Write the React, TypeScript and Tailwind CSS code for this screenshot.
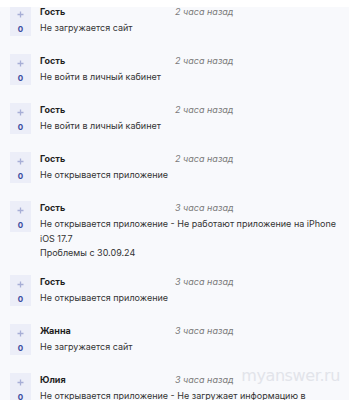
import React from "react";

type Item = { name: string; time: string; lines: string[] };

const items: Item[] = [
  { name: "Гость", time: "2 часа назад", lines: ["Не загружается сайт"] },
  { name: "Гость", time: "2 часа назад", lines: ["Не войти в личный кабинет"] },
  { name: "Гость", time: "2 часа назад", lines: ["Не войти в личный кабинет"] },
  { name: "Гость", time: "2 часа назад", lines: ["Не открывается приложение"] },
  {
    name: "Гость",
    time: "3 часа назад",
    lines: ["Не открывается приложение - Не работают приложение на iPhone iOS 17.7", "Проблемы с 30.09.24"],
  },
  { name: "Гость", time: "3 часа назад", lines: ["Не открывается приложение"] },
  { name: "Жанна", time: "3 часа назад", lines: ["Не загружается сайт"] },
  { name: "Юлия", time: "3 часа назад", lines: ["Не открывается приложение - Не загружает информацию в приложении"] },
];

export default function App() {
  return (
    <div
      className="relative w-[349px] h-[400px] overflow-hidden bg-[#f8f9fc]"
      style={{ fontFamily: "Inter, 'Liberation Sans', Arial, sans-serif" }}
    >
      <div className="absolute top-0 left-0 right-0 h-[7px] bg-white z-10" />
      <div className="flex flex-col mt-[-2px]">
        {items.map((it, i) => (
          <div key={i} className="flex gap-[9px] pl-[10px] pr-[12px] py-[7px]">
            <div className="min-h-[35px] shrink-0">
              <div className="w-[21px] h-[31px] bg-[#eceef8] flex flex-col items-center">
                <svg width="7" height="7" viewBox="0 0 7 7" className="mt-[6px]">
                  <path d="M3.5 0.5V6.5M0.5 3.5H6.5" stroke="#a7aed6" strokeWidth="1.3" />
                </svg>
                <span className="text-[8px] leading-[10px] mt-[6px] font-bold text-[#3a4aa0]">0</span>
              </div>
            </div>
            <div className="flex flex-col min-w-0">
              <div className="flex h-[16px] items-start">
                <span className="w-[135px] shrink-0 text-[9px] leading-[14px] font-bold text-[#1f1f1f]">{it.name}</span>
                <span className="text-[9px] leading-[14px] italic text-[#7a7a7a]">{it.time}</span>
              </div>
              <div className="text-[9px] leading-[14.5px] text-[#333333]">
                {it.lines.map((l, j) => (
                  <div key={j}>{l}</div>
                ))}
              </div>
            </div>
          </div>
        ))}
      </div>
      <div
        className="absolute right-[9px] bottom-[12px] text-[16px] tracking-tight text-[#e2e4ea]"
        style={{ fontFamily: "'DejaVu Sans', sans-serif" }}
      >
        myanswer.ru
      </div>
    </div>
  );
}
